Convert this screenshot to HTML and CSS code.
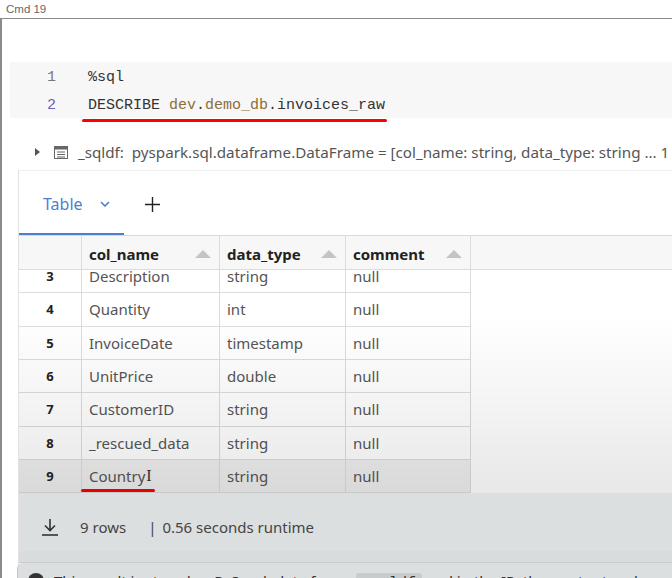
FILE: index.html
```html
<!DOCTYPE html>
<html>
<head>
<meta charset="utf-8">
<link rel="stylesheet" href="styles.css">
</head>
<body>
<div class="cmd-label">Cmd 19</div>
<div class="cell">
  <div class="code">
    <div class="line"><span class="ln">1</span><span class="src">%sql</span></div>
    <div class="line"><span class="ln ln-active">2</span><span class="src marked">DESCRIBE <span class="ident">dev</span>.<span class="ident">demo_db</span>.invoices_raw</span></div>
  </div>
  <div class="df-line">
    <svg class="caret" width="6" height="8" viewBox="0 0 6 8"><path d="M0 0 L5 4 L0 8 Z" fill="#555"/></svg>
    <svg class="tbl-icon" width="14" height="13" viewBox="0 0 14 13"><rect x="0.5" y="0.5" width="13" height="12" fill="none" stroke="#666"/><rect x="0.5" y="0.5" width="13" height="3" fill="#666"/><line x1="3" y1="6" x2="11" y2="6" stroke="#666"/><line x1="3" y1="8.5" x2="11" y2="8.5" stroke="#666"/><line x1="3" y1="11" x2="11" y2="11" stroke="#666"/></svg>
    <span class="df-text">_sqldf:&nbsp; pyspark.sql.dataframe.DataFrame = [col_name: string, data_type: string ... 1 more field]</span>
  </div>
  <div class="result">
    <div class="tabs">
      <div class="tab active">Table
        <svg class="chev" width="10" height="6" viewBox="0 0 10 6"><path d="M1 1 L5 5 L9 1" fill="none" stroke="#4b7fd1" stroke-width="1.6"/></svg>
      </div>
      <div class="add">
        <svg width="15" height="15" viewBox="0 0 15 15"><path d="M7.5 0 V15 M0 7.5 H15" stroke="#222" stroke-width="1.4"/></svg>
      </div>
    </div>
    <div class="grid">
      <div class="row head">
        <div class="c idx"></div>
        <div class="c name">col_name<span class="sort"></span></div>
        <div class="c type">data_type<span class="sort"></span></div>
        <div class="c cmt">comment<span class="sort"></span></div>
      </div>
      <div class="body">
        <div class="rows">
          <div class="row"><div class="c idx">3</div><div class="c name">Description</div><div class="c type">string</div><div class="c cmt">null</div></div>
          <div class="row"><div class="c idx">4</div><div class="c name">Quantity</div><div class="c type">int</div><div class="c cmt">null</div></div>
          <div class="row"><div class="c idx">5</div><div class="c name">InvoiceDate</div><div class="c type">timestamp</div><div class="c cmt">null</div></div>
          <div class="row"><div class="c idx">6</div><div class="c name">UnitPrice</div><div class="c type">double</div><div class="c cmt">null</div></div>
          <div class="row"><div class="c idx">7</div><div class="c name">CustomerID</div><div class="c type">string</div><div class="c cmt">null</div></div>
          <div class="row"><div class="c idx">8</div><div class="c name">_rescued_data</div><div class="c type">string</div><div class="c cmt">null</div></div>
          <div class="row hover"><div class="c idx">9</div><div class="c name"><span class="marked2">Country</span><span class="ibeam">I</span></div><div class="c type">string</div><div class="c cmt">null</div></div>
        </div>
        <div class="shade"></div>
      </div>
    </div>
    <div class="footer">
      <svg class="dl" width="18" height="18" viewBox="0 0 18 18"><path d="M9 1 V12 M4 7.5 L9 12.5 L14 7.5" fill="none" stroke="#333" stroke-width="1.6"/><path d="M1 17 H17" stroke="#333" stroke-width="1.6"/></svg>
      <span class="rows-count">9 rows</span>
      <span class="sep">|</span>
      <span class="runtime">0.56 seconds runtime</span>
    </div>
    <div class="gap"></div>
    <div class="banner">
      <span class="info"></span>
      <span class="banner-text">This result is stored as PySpark data frame <code>_sqldf</code> and in the IPython output cache as <code>_16</code></span>
    </div>
  </div>
</div>
</body>
</html>
```
FILE: styles.css
```css
html, body {
  margin: 0;
  padding: 0;
  background: #fff;
  overflow: hidden;
}
body {
  font-family: "Noto Sans", "Open Sans", sans-serif;
  width: 672px;
  height: 578px;
}
.cmd-label {
  height: 18px;
  line-height: 18px;
  padding-left: 6px;
  font-family: "Liberation Sans", Arial, sans-serif;
  font-size: 11.5px;
  color: #666;
}
.cell {
  border-top: 1px solid #8a8a8a;
  border-left: 2px solid #8a8a8a;
  height: 560px;
  overflow: hidden;
}
.code {
  margin: 43px 0 0 8px;
  background: #f7f7f8;
  padding: 2px 0 0 0;
  height: 54px;
  font-family: "Liberation Mono", "DejaVu Sans Mono", monospace;
  font-size: 15px;
  color: #333;
}
.line {
  display: flex;
  height: 28px;
  line-height: 28px;
}
.ln {
  width: 46px;
  text-align: right;
  color: #777;
  margin-right: 32px;
}
.ln-active {
  color: #6b62b8;
}
.ident {
  color: #8c6d3a;
}
.marked {
  position: relative;
}
.marked::after {
  content: "";
  position: absolute;
  left: -6px;
  right: -2px;
  bottom: -2px;
  height: 3px;
  border-radius: 2px;
  background: #f00;
}
.df-line {
  display: flex;
  align-items: center;
  height: 20px;
  margin-top: 24px;
  padding-left: 33px;
  color: #555;
  font-size: 15.2px;
  white-space: nowrap;
}
.caret {
  flex-shrink: 0;
  margin-right: 13px;
}
.tbl-icon {
  flex-shrink: 0;
  margin-right: 10px;
}
.result {
  margin: 8px 0 0 16px;
  border-left: 1px solid #e2e2e2;
  border-top: 1px solid #f0f0f0;
}
.tabs {
  display: flex;
  align-items: center;
  height: 64px;
  border-bottom: 1px solid #d9d9d9;
}
.tab {
  display: flex;
  align-items: center;
  flex-shrink: 0;
  box-sizing: border-box;
  height: 64px;
  padding: 4px 0 0 24px;
  width: 105px;
  border-bottom: 2px solid #4b7fd1;
  color: #4b7fd1;
  font-size: 16px;
}
.chev {
  flex-shrink: 0;
  margin-left: 17px;
}
.add {
  margin-left: 21px;
  padding-top: 2px;
  display: flex;
}
.grid {
  font-size: 15px;
}
.row {
  display: flex;
  height: 33.34px;
  box-sizing: border-box;
}
.c {
  box-sizing: border-box;
  flex-shrink: 0;
  border-right: 1px solid #dcdcdc;
  border-bottom: 1px solid #dcdcdc;
  padding-left: 7px;
  display: flex;
  align-items: center;
  color: #555;
}
.idx { width: 63px; justify-content: center; padding-left: 0; font-weight: bold; font-size: 13px; color: #222; }
.name { width: 138px; }
.type { width: 126px; }
.cmt { width: 125px; }
.head {
  height: 34px;
  background: #f7f7f7;
  border-bottom: 1px solid #dcdcdc;
}
.head .c {
  font-weight: bold;
  color: #222;
  border-bottom: none;
  justify-content: space-between;
  padding-right: 8px;
  padding-top: 2px;
}
.head .idx { padding-right: 0; }
.sort {
  width: 0;
  height: 0;
  border-left: 8px solid transparent;
  border-right: 8px solid transparent;
  border-bottom: 8px solid #c4c4c4;
}
.body {
  position: relative;
  height: 223px;
  overflow: hidden;
}
.rows {
  margin-top: -10px;
}
.hover .c { background: #efefef; }
.marked2 {
  position: relative;
}
.marked2::after {
  content: "";
  position: absolute;
  left: -8px;
  right: -10px;
  bottom: -6px;
  height: 3px;
  border-radius: 2px;
  background: #f00;
}
.ibeam {
  font-family: "Liberation Serif", serif;
  font-size: 16px;
  color: #333;
  margin-left: 1px;
}
.shade {
  position: absolute;
  inset: 0;
  pointer-events: none;
  background: linear-gradient(to bottom, rgba(0,0,0,0) 0%, rgba(0,0,0,0) 20%, rgba(0,0,0,0.09) 100%);
}
.footer {
  display: flex;
  align-items: center;
  box-sizing: border-box;
  height: 58px;
  padding: 10px 0 0 22px;
  background: #dcdfdf;
  color: #444;
  font-size: 15px;
}
.dl { flex-shrink: 0; margin-right: 21px; }
.sep { margin-left: 22px; margin-right: 6px; }
.gap {
  height: 11px;
  background: #d8dcdc;
  border-bottom: 1px solid #c8cccc;
}
.banner {
  display: flex;
  align-items: flex-start;
  height: 40px;
  margin-left: -2px;
  border-left: 1px solid #c8c8c8;
  border-radius: 6px 0 0 0;
  background: #dcdfdf;
  padding: 8px 0 0 10px;
  font-size: 15px;
  color: #333;
  white-space: nowrap;
}
.info {
  flex-shrink: 0;
  width: 16px;
  height: 16px;
  border-radius: 50%;
  background: #333;
  margin-right: 10px;
  margin-top: 2px;
}
.banner code {
  background: #c9cccc;
  padding: 2px 6px;
  border-radius: 3px;
  font-family: "Liberation Mono", monospace;
}
```
